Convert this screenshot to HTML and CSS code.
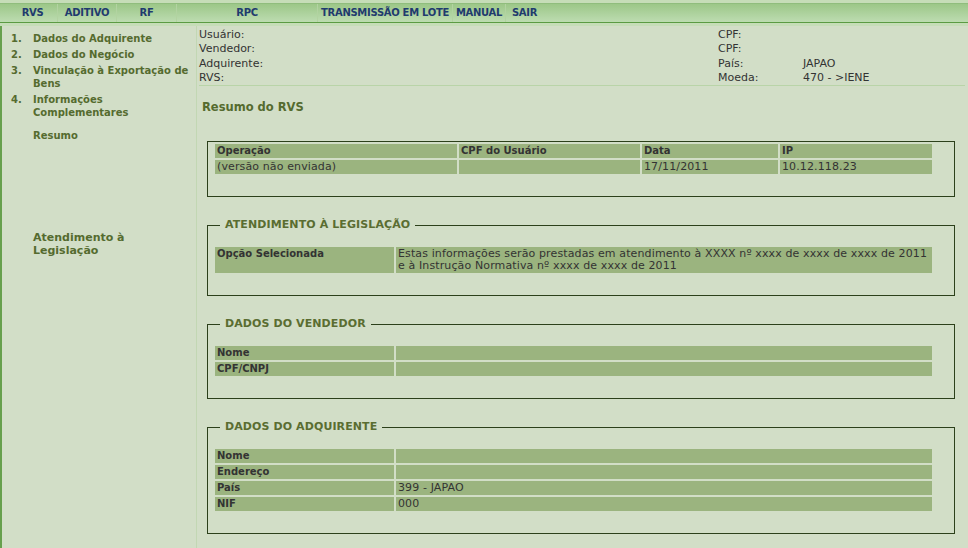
FILE: index.html
```html
<!DOCTYPE html>
<html lang="pt-BR">
<head>
<meta charset="utf-8">
<title>RVS - Resumo</title>
<link rel="stylesheet" href="styles.css">
</head>
<body>
<header class="topbar">
  <nav class="nav">
    <a class="nav-item nav-rvs" href="#">RVS</a>
    <a class="nav-item nav-aditivo" href="#">ADITIVO</a>
    <a class="nav-item nav-rf" href="#">RF</a>
    <a class="nav-item nav-rpc" href="#">RPC</a>
    <a class="nav-item nav-lote" href="#">TRANSMISSÃO EM LOTE</a>
    <a class="nav-item nav-manual" href="#">MANUAL</a>
    <a class="nav-item nav-sair" href="#">SAIR</a>
  </nav>
</header>
<div class="layout">
  <aside class="sidebar">
    <ol class="steps">
      <li class="step"><span class="step-num">1.</span><a class="step-link" href="#">Dados do Adquirente</a></li>
      <li class="step"><span class="step-num">2.</span><a class="step-link" href="#">Dados do Negócio</a></li>
      <li class="step"><span class="step-num">3.</span><a class="step-link" href="#">Vinculação à Exportação de Bens</a></li>
      <li class="step"><span class="step-num">4.</span><a class="step-link" href="#">Informações Complementares</a></li>
    </ol>
    <a class="side-link side-resumo" href="#">Resumo</a>
    <a class="side-link side-legis" href="#">Atendimento à Legislação</a>
  </aside>
  <main class="main">
    <div class="info">
      <span>Usuário:</span><span>CPF:</span><span></span>
      <span>Vendedor:</span><span>CPF:</span><span></span>
      <span>Adquirente:</span><span>País:</span><span>JAPAO</span>
      <span>RVS:</span><span>Moeda:</span><span>470 - &gt;IENE</span>
    </div>
    <h1 class="title">Resumo do RVS</h1>

    <fieldset class="box box-plain">
      <table class="grid">
        <colgroup><col class="c-op"><col class="c-cpf"><col class="c-data"><col class="c-ip"></colgroup>
        <tr><th>Operação</th><th>CPF do Usuário</th><th>Data</th><th>IP</th></tr>
        <tr><td>(versão não enviada)</td><td></td><td>17/11/2011</td><td>10.12.118.23</td></tr>
      </table>
    </fieldset>

    <fieldset class="box">
      <legend class="box-title">ATENDIMENTO À LEGISLAÇÃO</legend>
      <table class="grid">
        <colgroup><col class="c-label"><col class="c-value"></colgroup>
        <tr><th>Opção Selecionada</th><td class="long">Estas informações serão prestadas em atendimento à XXXX nº xxxx de xxxx de xxxx de 2011<br>e à Instrução Normativa nº xxxx de xxxx de 2011</td></tr>
      </table>
    </fieldset>

    <fieldset class="box">
      <legend class="box-title">DADOS DO VENDEDOR</legend>
      <table class="grid">
        <colgroup><col class="c-label"><col class="c-value"></colgroup>
        <tr><th>Nome</th><td></td></tr>
        <tr><th>CPF/CNPJ</th><td></td></tr>
      </table>
    </fieldset>

    <fieldset class="box">
      <legend class="box-title">DADOS DO ADQUIRENTE</legend>
      <table class="grid">
        <colgroup><col class="c-label"><col class="c-value"></colgroup>
        <tr><th>Nome</th><td></td></tr>
        <tr><th>Endereço</th><td></td></tr>
        <tr><th>País</th><td>399 - JAPAO</td></tr>
        <tr><th>NIF</th><td>000</td></tr>
      </table>
    </fieldset>
  </main>
</div>
</body>
</html>
```

FILE: styles.css
```css
* { box-sizing: border-box; }

html, body {
  margin: 0;
  padding: 0;
}

body {
  width: 968px;
  height: 548px;
  overflow: hidden;
  background: #d2dec7;
  font-family: "DejaVu Sans", Verdana, sans-serif;
  font-size: 11px;
  color: #333;
}

/* ---------- top navigation ---------- */
.topbar {
  height: 26px;
  padding-top: 3px;
  background: #c6ddb8;
}

.nav {
  display: flex;
  height: 20px;
  padding-left: 8px;
  border-top: 1px solid #90bd7d;
  border-bottom: 1px solid #5b9b43;
  background: linear-gradient(to bottom, #9cc788, #bddcb1);
}

.nav-item {
  display: block;
  line-height: 18px;
  text-align: center;
  font-size: 10px;
  font-weight: bold;
  letter-spacing: -0.3px;
  color: #1f3b6e;
  text-decoration: none;
  border-left: 1px solid #b2d3a1;
}

.nav-rvs { width: 49px; border-left: none; }
.nav-aditivo { width: 59px; }
.nav-rf { width: 60px; }
.nav-rpc { width: 141px; }
.nav-lote { width: 135px; }
.nav-manual { width: 53px; }
.nav-sair { width: 38px; }

/* ---------- layout ---------- */
.layout {
  display: grid;
  grid-template-columns: 197px 1fr;
  height: 522px;
}

.sidebar {
  border-left: 2px solid #67a04d;
  border-right: 1px solid #c2d7b3;
  padding: 6px 4px 0 9px;
}

.steps {
  list-style: none;
  margin: 0;
  padding: 0;
}

.step {
  display: grid;
  grid-template-columns: 22px 1fr;
  line-height: 13px;
  margin-bottom: 3px;
  font-size: 10px;
  font-weight: bold;
  color: #556b2f;
}

.step-num { color: #556b2f; }

.step-link,
.side-link {
  color: #556b2f;
  text-decoration: none;
  font-weight: bold;
}

.side-link {
  display: block;
  margin-left: 22px;
  line-height: 13px;
}

.side-resumo {
  margin-top: 10px;
  font-size: 10px;
}

.side-legis {
  margin-top: 89px;
  width: 140px;
  font-size: 11px;
  line-height: 13px;
}

/* ---------- main ---------- */
.main {
  padding-top: 2px;
}

.info {
  display: grid;
  grid-template-columns: 519px 85px 1fr;
  grid-auto-rows: 14.3px;
  line-height: 14.3px;
  margin: 0 3px 0 2px;
  border-bottom: 1px solid #b9d4a8;
  color: #333;
}

.title {
  margin: 14px 0 0 5px;
  font-size: 11.5px;
  line-height: 15px;
  font-weight: bold;
  color: #556b2f;
}

.box {
  width: 748px;
  margin: 21px 0 0 10px;
  padding: 13px 20px 20px 5px;
  border: 1px solid #2c401b;
  min-width: 0;
}

.box-plain {
  margin-top: 26px;
  padding-top: 0;
}

.box-title {
  margin-left: 7px;
  padding: 0 5px;
  font-size: 11px;
  line-height: 14px;
  font-weight: bold;
  letter-spacing: 0.1px;
  color: #5a6d31;
}

.grid {
  width: 721px;
  table-layout: fixed;
  border-collapse: separate;
  border-spacing: 2px;
}

.c-op { width: 242px; }
.c-cpf { width: 181px; }
.c-data { width: 136px; }
.c-ip { width: 152px; }
.c-label { width: 179px; }
.c-value { width: 536px; }

.grid th,
.grid td {
  height: 14px;
  padding: 1px 2px;
  line-height: 12px;
  background: #9bb47f;
  text-align: left;
  vertical-align: top;
  color: #333;
  white-space: nowrap;
  overflow: hidden;
}

.grid th {
  font-size: 10px;
  font-weight: bold;
}

.grid td {
  font-size: 11px;
  letter-spacing: 0.12px;
}
```
